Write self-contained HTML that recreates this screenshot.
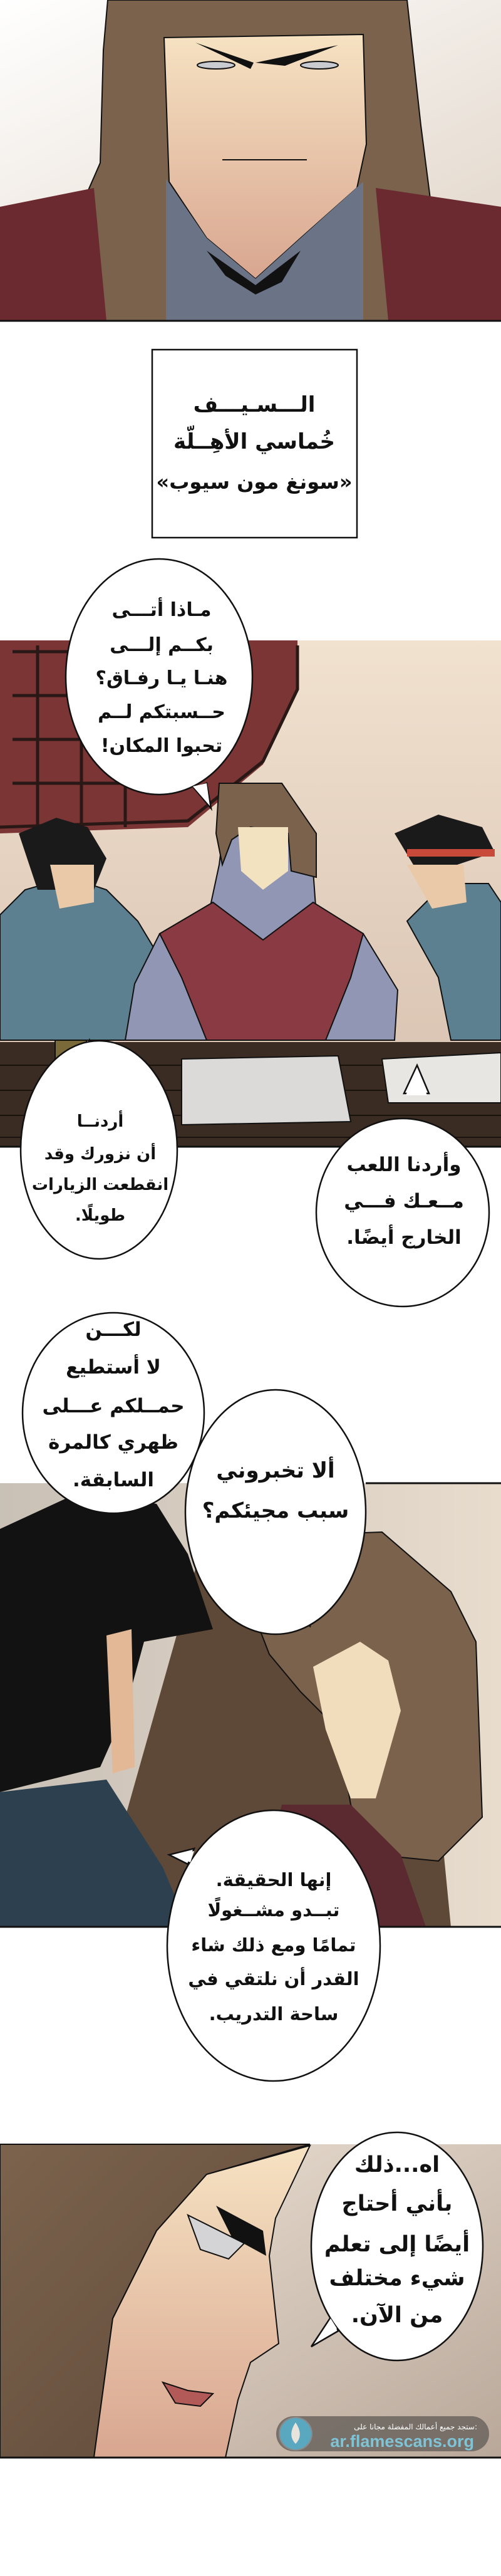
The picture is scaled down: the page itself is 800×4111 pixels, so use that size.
<!DOCTYPE html>
<html><head><meta charset="utf-8"><style>
html,body{margin:0;padding:0;background:#fff}
svg{display:block}
text{font-family:"DejaVu Sans","Liberation Sans",sans-serif;fill:#111}
.b text{font-weight:bold}
</style></head><body>
<svg width="800" height="4111" viewBox="0 0 800 4111" xmlns="http://www.w3.org/2000/svg">
<defs>
<linearGradient id="g1" x1="0" y1="0" x2="1" y2="1"><stop offset="0" stop-color="#ffffff"/><stop offset="1" stop-color="#e3d8cc"/></linearGradient>
<linearGradient id="g2" x1="0" y1="0" x2="0" y2="1"><stop offset="0" stop-color="#f1e1cf"/><stop offset="1" stop-color="#d6bfae"/></linearGradient>
<linearGradient id="g3" x1="0" y1="0" x2="1" y2="0"><stop offset="0" stop-color="#c9c0b6"/><stop offset="1" stop-color="#e8dccd"/></linearGradient>
<linearGradient id="g4" x1="0" y1="0" x2="1" y2="1"><stop offset="0" stop-color="#f0e6da"/><stop offset="1" stop-color="#b9a89a"/></linearGradient>
<linearGradient id="face" x1="0" y1="0" x2="0" y2="1"><stop offset="0" stop-color="#f6e2c2"/><stop offset="1" stop-color="#d9a690"/></linearGradient>
<linearGradient id="hair" x1="0" y1="0" x2="1" y2="1"><stop offset="0" stop-color="#7b634d"/><stop offset="1" stop-color="#5e4838"/></linearGradient>
</defs>

<!-- PANEL 1 -->
<rect x="0" y="0" width="800" height="390" fill="url(#g1)"/>
<path d="M172 0 L650 0 L672 200 L690 340 L730 390 L800 390 L800 512 L0 512 L0 420 L125 340 L160 260 L165 80 Z" fill="#7a624c" stroke="#111" stroke-width="2"/>
<path d="M0 330 L150 300 L170 512 L0 512 Z" fill="#6b2a30"/>
<path d="M600 300 L800 330 L800 512 L620 512 Z" fill="#6b2a30"/>
<path d="M262 60 L580 55 L585 230 L570 300 L480 380 L408 445 L330 380 L270 290 Z" fill="url(#face)" stroke="#111" stroke-width="2"/>
<path d="M265 285 L330 380 L408 445 L480 380 L580 290 L580 512 L265 512 Z" fill="#6b7386"/>
<path d="M330 400 L408 455 L480 400 L450 450 L408 470 L360 440 Z" fill="#111"/>
<path d="M312 68 L405 100 L400 110 Z M408 100 L540 72 L455 105 Z" fill="#111"/>
<ellipse cx="345" cy="104" rx="30" ry="6" fill="#c9cbd0" stroke="#111" stroke-width="2"/>
<ellipse cx="510" cy="104" rx="30" ry="6" fill="#c9cbd0" stroke="#111" stroke-width="2"/>
<path d="M355 255 L490 255" stroke="#111" stroke-width="2" fill="none"/>
<line x1="0" y1="512" x2="800" y2="512" stroke="#111" stroke-width="3"/>

<!-- caption -->
<rect x="243" y="558" width="327" height="300" fill="#fff" stroke="#111" stroke-width="2.5"/>
<text x="406" y="657" font-size="34" font-weight="bold" text-anchor="middle" direction="rtl">الـــسـيـــف</text>
<text x="406" y="716" font-size="34" font-weight="bold" text-anchor="middle" direction="rtl">خُماسي الأهِــلّة</text>
<text x="406" y="780" font-size="32" font-weight="bold" text-anchor="middle" direction="rtl">«سونغ مون سيوب»</text>

<!-- PANEL 2 -->
<rect x="0" y="1022" width="800" height="808" fill="url(#g2)"/>
<path d="M0 1022 L475 1022 L475 1100 L420 1220 L300 1320 L0 1330 Z" fill="#7a3534"/>
<g stroke="#2a1816" stroke-width="5" fill="none">
<path d="M20 1040 H250 M20 1110 H250 M20 1180 H250 M20 1250 H250 M60 1030 V1320 M130 1030 V1320 M200 1030 V1320"/>
<path d="M475 1030 L475 1100 L420 1215 L300 1310 L0 1320"/>
</g>
<path d="M0 1460 L40 1420 L110 1400 L170 1420 L220 1470 L250 1520 L240 1660 L0 1660 Z" fill="#5d8090" stroke="#111" stroke-width="2"/>
<path d="M30 1330 L90 1305 L140 1320 L170 1370 L150 1420 L60 1420 Z" fill="#1a1a1a"/>
<path d="M80 1380 L150 1380 L150 1440 L95 1450 Z" fill="#e9c9a8"/>
<path d="M255 1490 L335 1450 L350 1380 L360 1300 L400 1250 L450 1255 L495 1320 L505 1460 L580 1490 L635 1580 L630 1660 L200 1660 L215 1570 Z" fill="#9096b3" stroke="#111" stroke-width="2"/>
<path d="M350 1250 L450 1250 L505 1330 L505 1400 L465 1390 L460 1330 L400 1320 L370 1340 L355 1380 L345 1330 Z" fill="#7a624c" stroke="#111" stroke-width="2"/>
<path d="M380 1320 L460 1320 L460 1390 L420 1420 L385 1390 Z" fill="#f3e2bf"/>
<path d="M255 1490 L340 1440 L420 1500 L500 1440 L580 1490 L560 1560 L520 1660 L330 1660 L290 1560 Z" fill="#8a3a42" stroke="#111" stroke-width="2"/>
<path d="M650 1470 L710 1410 L780 1410 L800 1440 L800 1660 L720 1660 L700 1560 Z" fill="#5d8090" stroke="#111" stroke-width="2"/>
<path d="M630 1330 L700 1300 L770 1320 L790 1360 L730 1380 L660 1380 Z" fill="#1a1a1a"/>
<rect x="650" y="1355" width="140" height="12" fill="#c84a3a"/>
<path d="M650 1380 L740 1380 L745 1440 L690 1450 Z" fill="#e9c9a8"/>
<rect x="0" y="1663" width="800" height="167" fill="#3a2c22"/>
<g stroke="#1a120d" stroke-width="2"><path d="M0 1700 H800 M0 1740 H800 M0 1780 H800 M0 1815 H800"/></g>
<path d="M290 1690 L540 1685 L560 1790 L290 1795 Z" fill="#dcdad8" stroke="#111" stroke-width="2"/>
<path d="M610 1690 L800 1680 L800 1760 L620 1760 Z" fill="#e8e6e2" stroke="#111" stroke-width="2"/>
<rect x="88" y="1660" width="50" height="50" fill="#7a6a3a" stroke="#111" stroke-width="2"/>
<line x1="0" y1="1830" x2="800" y2="1830" stroke="#111" stroke-width="3"/>

<g class="b">
<path d="M310 1258 L337 1290 L330 1250 Z" fill="#fff" stroke="#111" stroke-width="2.5"/>
<ellipse cx="254" cy="1080" rx="149" ry="188" fill="#fff" stroke="#111" stroke-width="2.5"/>
<path d="M308 1255 L335 1286 L330 1250 Z" fill="#fff"/>
<g font-size="30" text-anchor="middle" direction="rtl">
<text x="258" y="983">مـاذا أتـــى</text>
<text x="258" y="1039">بكــم إلـــى</text>
<text x="258" y="1092">هنـا يـا رفـاق؟</text>
<text x="258" y="1146">حــسبتكم لــم</text>
<text x="258" y="1200">تحبوا المكان!</text>
</g>

<path d="M130 1700 L143 1660 L165 1705 Z" fill="#fff" stroke="#111" stroke-width="2.5"/>
<ellipse cx="158" cy="1835" rx="125" ry="174" fill="#fff" stroke="#111" stroke-width="2.5"/>
<path d="M132 1702 L143 1664 L162 1707 Z" fill="#fff"/>
<g font-size="26" text-anchor="middle" direction="rtl">
<text x="160" y="1798">أردنــا</text>
<text x="160" y="1850">أن نزورك وقد</text>
<text x="160" y="1899">انقطعت الزيارات</text>
<text x="160" y="1948">طويلًا.</text>
</g>

<path d="M645 1745 L666 1700 L685 1745 Z" fill="#fff" stroke="#111" stroke-width="2.5"/>
<ellipse cx="643" cy="1935" rx="138" ry="150" fill="#fff" stroke="#111" stroke-width="2.5"/>
<path d="M648 1748 L666 1704 L682 1748 Z" fill="#fff"/>
<g font-size="31" text-anchor="middle" direction="rtl">
<text x="645" y="1869">وأردنا اللعب</text>
<text x="645" y="1927">مــعـك فـــي</text>
<text x="645" y="1985">الخارج أيضًا.</text>
</g>
</g>

<!-- PANEL 3 -->
<rect x="0" y="2367" width="800" height="708" fill="url(#g3)"/>
<path d="M330 2440 L380 2500 L400 2560 L620 2700 L700 2870 L720 3075 L180 3075 L200 2900 Z" fill="#5e4838"/>
<path d="M380 2510 L470 2450 L610 2445 L720 2540 L760 2620 L770 2900 L700 2970 L600 2960 L560 2880 L540 2760 L480 2700 L430 2640 Z" fill="#7a624c" stroke="#111" stroke-width="2"/>
<path d="M500 2660 L575 2620 L620 2650 L640 2730 L600 2870 L560 2870 L520 2760 Z" fill="#f1dcbc"/>
<path d="M450 2880 L560 2880 L640 2960 L680 3075 L400 3075 Z" fill="#5a2a30"/>
<path d="M0 2440 L130 2380 L250 2400 L300 2480 L340 2600 L230 2620 L200 2730 L160 2820 L0 2860 Z" fill="#121212"/>
<path d="M170 2610 L210 2600 L215 2820 L180 2830 Z" fill="#e3b896"/>
<path d="M0 2860 L170 2840 L260 2980 L300 3075 L0 3075 Z" fill="#2c4050"/>
<line x1="0" y1="3075" x2="800" y2="3075" stroke="#111" stroke-width="3"/>
<line x1="584" y1="2367" x2="800" y2="2367" stroke="#111" stroke-width="3"/>

<g class="b">
<ellipse cx="181" cy="2255" rx="145" ry="160" fill="#fff" stroke="#111" stroke-width="2.5"/>
<g font-size="31" text-anchor="middle" direction="rtl">
<text x="181" y="2132">لكـــن</text>
<text x="181" y="2192">لا أستطيع</text>
<text x="181" y="2254">حمــلكم عـــلى</text>
<text x="181" y="2312">ظهري كالمرة</text>
<text x="181" y="2372">السابقة.</text>
</g>
<path d="M460 2560 L495 2595 L500 2555 Z" fill="#fff" stroke="#111" stroke-width="2.5"/>
<ellipse cx="440" cy="2413" rx="144" ry="195" fill="#fff" stroke="#111" stroke-width="2.5"/>
<path d="M462 2556 L492 2588 L496 2552 Z" fill="#fff"/>
<g font-size="34" text-anchor="middle" direction="rtl">
<text x="440" y="2358">ألا تخبروني</text>
<text x="440" y="2422">سبب مجيئكم؟</text>
</g>

<path d="M300 2975 L270 2960 L310 2950 Z" fill="#fff" stroke="#111" stroke-width="2.5"/>
<ellipse cx="437" cy="3105" rx="170" ry="216" fill="#fff" stroke="#111" stroke-width="2.5"/>
<path d="M304 2972 L276 2961 L310 2954 Z" fill="#fff"/>
<g font-size="29" text-anchor="middle" direction="rtl">
<text x="437" y="3010">إنها الحقيقة.</text>
<text x="437" y="3058">تبــدو مشــغولًا</text>
<text x="437" y="3114">تمامًا ومع ذلك شاء</text>
<text x="437" y="3168">القدر أن نلتقي في</text>
<text x="437" y="3224">ساحة التدريب.</text>
</g>
</g>

<!-- PANEL 4 -->
<rect x="0" y="3422" width="800" height="500" fill="url(#g4)"/>
<path d="M0 3422 L495 3422 L330 3470 L250 3560 L180 3700 L150 3922 L0 3922 Z" fill="url(#hair)" stroke="#111" stroke-width="2"/>
<path d="M495 3424 L440 3540 L430 3600 L445 3740 L400 3770 L380 3830 L360 3922 L150 3922 L180 3700 L250 3560 L330 3470 Z" fill="url(#face)" stroke="#111" stroke-width="2"/>
<path d="M345 3520 L420 3560 L425 3600 L370 3570 Z" fill="#111"/>
<path d="M300 3535 L390 3580 L365 3605 L320 3590 Z" fill="#d4d4d6" stroke="#111" stroke-width="2"/>
<path d="M260 3802 L300 3815 L340 3820 L320 3840 L280 3835 Z" fill="#b25a58" stroke="#111" stroke-width="2"/>
<line x1="0" y1="3922" x2="800" y2="3922" stroke="#111" stroke-width="3"/>

<g class="b">
<path d="M540 3720 L497 3745 L530 3695 Z" fill="#fff" stroke="#111" stroke-width="2.5"/>
<ellipse cx="634" cy="3585" rx="137" ry="182" fill="#fff" stroke="#111" stroke-width="2.5"/>
<path d="M538 3716 L503 3740 L528 3700 Z" fill="#fff"/>
<g font-size="35" text-anchor="middle" direction="rtl">
<text x="634" y="3466">اه...ذلك</text>
<text x="634" y="3528">بأني أحتاج</text>
<text x="634" y="3593">أيضًا إلى تعلم</text>
<text x="634" y="3647">شيء مختلف</text>
<text x="634" y="3706">من الآن.</text>
</g>
</g>

<!-- watermark -->
<rect x="441" y="3856" width="340" height="56" rx="28" fill="#6f6862" opacity="0.9"/>
<circle cx="472" cy="3884" r="26" fill="#5aa8c0" stroke="#8a8a8a" stroke-width="2"/>
<path d="M472 3866 C464 3878 462 3890 472 3900 C482 3890 480 3878 472 3866 Z" fill="#e8e4dc"/>
<text x="762" y="3877" font-size="12" text-anchor="end" style="fill:#fff">ستجد جميع أعمالك المفضلة مجانا على:</text>
<text x="757" y="3905" font-size="27" font-weight="bold" text-anchor="end" style="fill:#7ec3d6;font-family:'Liberation Sans',sans-serif">ar.flamescans.org</text>
</svg>
</body></html>
